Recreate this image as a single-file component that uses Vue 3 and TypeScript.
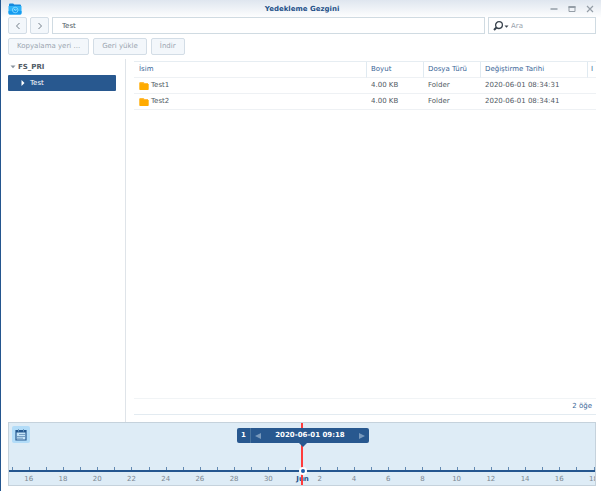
<script setup lang="ts">
import { ref } from 'vue'

interface Entry {
  name: string
  size: string
  type: string
  modified: string
}

interface Mark {
  label: string
  left: string
  current: boolean
}

const path = ref('Test')
const query = ref('')
const entries: Entry[] = [
  { name: 'Test1', size: '4.00 KB', type: 'Folder', modified: '2020-06-01 08:34:31' },
  { name: 'Test2', size: '4.00 KB', type: 'Folder', modified: '2020-06-01 08:34:41' },
]

// Days run from 15 May to 18 June; positions are relative to the selected day.
const dayStep = 2.921
const selectedAt = 50.1
const marks: Mark[] = Array.from({ length: 35 }, (_, i) => {
  const day = i + 15
  const offset = i - 17
  let label = ''
  if (offset === 0) label = 'Jun'
  else if (offset < 0) label = day % 2 === 0 ? String(day) : ''
  else label = (offset + 1) % 2 === 0 ? String(offset + 1) : ''
  return { label, left: `${selectedAt + offset * dayStep}%`, current: offset === 0 }
})
</script>

<template>
  <main class="window">
    <header class="titlebar">
      <svg class="app-icon" viewBox="0 0 14 12" aria-hidden="true">
        <path d="M1 1.500Q1 .5 2 .5h3.200l1 1H12q1 0 1 1V5H1z" fill="#1489dd" />
        <path d="M.5 3h13v7q0 1.500-1.500 1.500H2Q.5 11.500.5 10z" fill="#2bb2f9" />
        <path d="M.5 8h13v2q0 1.500-1.500 1.500H2Q.5 11.500.5 10z" fill="#159bf0" />
        <circle cx="7.200" cy="7" r="2.800" fill="none" stroke="#8ddcff" stroke-width=".8" />
        <path d="M6 5.800 7.200 7.300l1.400-.8" fill="none" stroke="#c5efff" stroke-width=".7" />
      </svg>
      <h1>Yedekleme Gezgini</h1>
      <div class="window-controls">
        <button type="button" aria-label="Küçült">
          <svg viewBox="0 0 8 8"><path d="M.5 4h7" stroke-width="1.500" /></svg>
        </button>
        <button type="button" aria-label="Büyüt">
          <svg viewBox="0 0 8 8"><path d="M1 1.500h6v5H1z" /><path d="M.5 2h7" stroke-width="2" /></svg>
        </button>
        <button type="button" aria-label="Kapat">
          <svg viewBox="0 0 8 8"><path d="m1 1 6 6M7 1 1 7" stroke-width="1.200" /></svg>
        </button>
      </div>
    </header>

    <nav class="navigation">
      <button class="btn nav-btn" type="button" aria-label="Geri">
        <svg viewBox="0 0 8 8"><path d="M5.500 1 2.500 4l3 3" /></svg>
      </button>
      <button class="btn nav-btn" type="button" aria-label="İleri">
        <svg viewBox="0 0 8 8"><path d="m2.500 1 3 3-3 3" /></svg>
      </button>
      <input v-model="path" class="path" type="text" aria-label="Yol" />
      <label class="search">
        <svg viewBox="0 0 16 10" aria-hidden="true">
          <circle cx="6" cy="4.100" r="3.400" fill="none" stroke="#39434d" stroke-width="1.300" />
          <path d="M3.700 6.300 1 9" stroke="#39434d" stroke-width="2" />
          <path d="M11.500 4.500h4l-2 2.200z" fill="#39434d" />
        </svg>
        <input v-model="query" type="text" placeholder="Ara" aria-label="Ara" />
      </label>
    </nav>

    <div class="toolbar">
      <button class="btn" type="button" disabled>Kopyalama yeri ...</button>
      <button class="btn" type="button" disabled>Geri yükle</button>
      <button class="btn" type="button" disabled>İndir</button>
    </div>

    <div class="content">
      <aside class="tree">
        <button class="root" type="button" aria-expanded="true">
          <svg viewBox="0 0 6 6" aria-hidden="true"><path d="M.5 1.500h5L3 4.300z" /></svg>
          FS_PRI
        </button>
        <button class="node" type="button">
          <svg viewBox="0 0 6 6" aria-hidden="true"><path d="M1.500 0 4.500 3l-3 3z" /></svg>
          Test
        </button>
      </aside>

      <section class="files">
        <table>
          <colgroup>
            <col />
            <col class="col-size" />
            <col class="col-type" />
            <col class="col-date" />
            <col class="col-more" />
          </colgroup>
          <thead>
            <tr>
              <th>İsim</th>
              <th>Boyut</th>
              <th>Dosya Türü</th>
              <th>Değiştirme Tarihi</th>
              <th>I</th>
            </tr>
          </thead>
          <tbody>
            <tr v-for="entry in entries" :key="entry.name">
              <td>
                <span class="name">
                  <svg viewBox="0 0 10 8" aria-hidden="true">
                    <path d="M.5 0h4l1 1H9v1H.5z" fill="#ffbb3d" />
                    <path d="M.3 1.300h4l1 .7h4.400v5.200q0 .8-.8.8H1.100q-.8 0-.8-.8z" fill="#ffab00" />
                  </svg>
                  {{ entry.name }}
                </span>
              </td>
              <td>{{ entry.size }}</td>
              <td>{{ entry.type }}</td>
              <td>{{ entry.modified }}</td>
              <td></td>
            </tr>
          </tbody>
        </table>
        <footer class="count">2 öğe</footer>
      </section>
    </div>

    <section class="timeline">
      <button class="calendar" type="button" aria-label="Takvim">
        <svg viewBox="0 0 12 12">
          <path d="M1 1.500h10v9.500H1z" fill="#c4e3f7" stroke="#24588f" stroke-width="1.200" />
          <path d="M1 1.500h10v2H1z" fill="#24588f" />
          <path d="M3.500 0v2.500M8.500 0v2.500" stroke="#6e9cc4" />
          <path d="M4.500 5.500h5M2.500 7.500h7M2.500 9.200h5" stroke="#24588f" stroke-dasharray="1 1" />
        </svg>
      </button>
      <div class="axis">
        <div v-for="(mark, i) in marks" :key="i" class="mark" :style="{ left: mark.left }">
          <span :class="{ current: mark.current }">{{ mark.label }}</span>
        </div>
      </div>
      <div class="cursor"></div>
      <div class="dot"></div>
      <div class="version">
        <b>1</b>
        <button type="button" aria-label="Önceki sürüm">
          <svg viewBox="0 0 6 6"><path d="M6 0v6L0 3z" /></svg>
        </button>
        <time>2020-06-01 09:18</time>
        <button type="button" aria-label="Sonraki sürüm">
          <svg viewBox="0 0 6 6"><path d="M0 0v6l6-3z" /></svg>
        </button>
      </div>
    </section>
  </main>
</template>

<style>
body {
  margin: 0;
}
</style>

<style scoped>
.window,
.window * {
  box-sizing: border-box;
}

.window {
  display: flex;
  flex-direction: column;
  min-height: 100vh;
  padding: 0 5px 5px 7px;
  border-left: 1px solid #24568f;
  background: linear-gradient(#dfe6ef, #fff 18px);
  color: #505a64;
  font: 7px/16px "DejaVu Sans", Verdana, sans-serif;
}

button,
input {
  font: inherit;
  color: inherit;
  margin: 0;
  padding: 0;
  border: 0;
  background: none;
}

svg {
  display: block;
  flex: none;
}

.titlebar {
  display: grid;
  grid-template-columns: 1fr auto 1fr;
  align-items: center;
  height: 17px;
}

.app-icon {
  width: 14px;
  height: 12px;
}

h1 {
  margin: 0;
  font-size: 7px;
  font-weight: bold;
  color: #245189;
}

.window-controls {
  display: flex;
  justify-content: flex-end;
  gap: 10px;
  padding-right: 2px;
}

.window-controls svg,
.nav-btn svg {
  width: 8px;
  height: 8px;
  fill: none;
  stroke: #959ea7;
}

.navigation {
  display: flex;
  gap: 3px;
}

.btn {
  height: 17px;
  padding: 0 8px;
  border: 1px solid #d3dde6;
  border-radius: 2px;
  background: #f3f7fb;
  color: #9aa5b0;
  line-height: 15px;
}

.nav-btn {
  display: grid;
  place-items: center;
  width: 19px;
  padding: 0;
}

.nav-btn svg {
  stroke: #737e89;
}

.path,
.search {
  height: 17px;
  border: 1px solid #d0dbe2;
  background: #fff;
}

.path {
  flex: 1;
  min-width: 0;
  padding: 0 9px;
}

.search {
  display: flex;
  align-items: center;
  gap: 2px;
  width: 108px;
  padding-left: 4px;
}

.search svg {
  width: 16px;
  height: 10px;
}

.search input {
  flex: 1;
  min-width: 0;
}

.search input::placeholder {
  color: #98a2ab;
  opacity: 1;
}

.toolbar {
  display: flex;
  gap: 4px;
  padding: 4px 0;
}

.content {
  display: flex;
  flex: 1;
}

.tree {
  display: flex;
  flex-direction: column;
  width: 118px;
  padding-right: 9px;
  border-right: 1px solid #dfe4e9;
}

.tree button {
  display: flex;
  align-items: center;
  height: 16px;
}

.tree svg {
  width: 6px;
  height: 6px;
}

.tree .root {
  gap: 2px;
  padding-left: 2px;
  font-weight: bold;
}

.root svg {
  fill: #88929c;
}

.tree .node {
  gap: 4px;
  padding-left: 12px;
  border-radius: 1px;
  background: #28588f;
  color: #fff;
}

.node svg {
  fill: #fff;
}

.files {
  display: flex;
  flex: 1;
  flex-direction: column;
  min-width: 0;
  padding: 2px 0 7px 8px;
}

table {
  width: 100%;
  table-layout: fixed;
  border-collapse: separate;
  border-spacing: 0;
  border-top: 1px solid #e6edf2;
}

.col-size,
.col-type {
  width: 57px;
}

.col-date {
  width: 107px;
}

.col-more {
  width: 9px;
}

th,
td {
  height: 16px;
  padding: 0 0 0 5px;
  border-bottom: 1px solid #eef1f4;
  line-height: 15px;
  text-align: left;
  white-space: nowrap;
  overflow: hidden;
}

th {
  color: #3a6698;
  font-weight: normal;
}

th + th {
  padding-left: 4px;
  border-left: 1px solid #e0eaf1;
}

th:last-child {
  padding-left: 3px;
}

.name {
  display: flex;
  align-items: center;
  gap: 2px;
}

.name svg {
  width: 10px;
  height: 8px;
}

.count {
  height: 17px;
  margin-top: auto;
  padding-right: 4px;
  border-top: 1px solid #f1f4f6;
  border-bottom: 1px solid #e3ebf1;
  color: #3a6698;
  line-height: 15px;
  text-align: right;
}

.timeline {
  position: relative;
  display: flex;
  flex-direction: column;
  justify-content: space-between;
  align-items: flex-start;
  height: 64px;
  border: 1px solid #c5d2dc;
  background: #deecf6;
  overflow: hidden;
}

.calendar {
  display: grid;
  place-items: center;
  width: 18px;
  height: 17px;
  margin: 3px;
  border-radius: 2px;
  background: #b2dcf8;
}

.calendar svg {
  width: 12px;
  height: 12px;
}

.axis {
  position: relative;
  width: 100%;
  height: 15px;
  border-top: 2px solid #24568f;
}

.mark {
  position: absolute;
  top: -5px;
  width: 1px;
  height: 3px;
  background: #6289b1;
}

.mark span {
  position: absolute;
  top: 5px;
  left: -12px;
  width: 24px;
  color: #7b8791;
  line-height: 15px;
  text-align: center;
}

.mark .current {
  color: #245189;
  font-weight: bold;
}

.cursor {
  position: absolute;
  top: 0;
  bottom: 0;
  left: 50%;
  width: 2px;
  margin-left: -1px;
  background: #ff3c3c;
}

.dot {
  position: absolute;
  bottom: 10px;
  left: 50%;
  width: 8px;
  height: 8px;
  margin-left: -3px;
  border: 2px solid #fff;
  border-radius: 50%;
  background: #1d5dab;
}

.version {
  position: absolute;
  top: 5px;
  left: 50%;
  display: flex;
  align-items: center;
  width: 132px;
  height: 15px;
  margin-left: -65px;
  border-radius: 2px;
  background: #28588f;
  color: #fff;
  font-weight: bold;
  line-height: 15px;
}

.version::after {
  content: "";
  position: absolute;
  top: 100%;
  left: 50%;
  margin-left: -4px;
  border: 4px solid transparent;
  border-top-color: #28588f;
  border-bottom: 0;
}

.version b {
  width: 14px;
  border-right: 1px solid #49749f;
  text-align: center;
}

.version time {
  flex: 1;
  text-align: center;
}

.version button {
  padding: 0 4px;
}

.version svg {
  width: 6px;
  height: 6px;
  fill: #7899bc;
}
</style>
